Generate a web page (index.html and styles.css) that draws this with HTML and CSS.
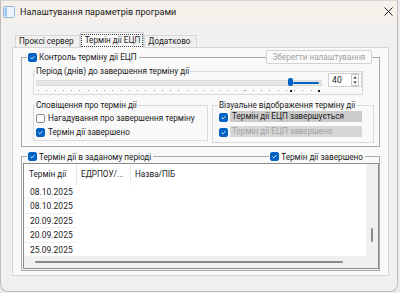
FILE: index.html
```html
<!DOCTYPE html>
<html lang="uk">
<head>
<meta charset="utf-8">
<title>Налаштування параметрів програми</title>
<link rel="stylesheet" href="styles.css">
</head>
<body>
<div class="window">
  <div class="titlebar">
    <svg class="app-icon" viewBox="0 0 12 12" width="12" height="12">
      <rect x="0.5" y="0.5" width="11" height="11" rx="1" fill="#eef5fc" stroke="#8fb8e0"/>
      <rect x="1.5" y="1.5" width="2.5" height="9" fill="#9cc3ea"/>
    </svg>
    <span class="title">Налаштування параметрів програми</span>
    <svg class="close" viewBox="0 0 9 9" width="9" height="9">
      <path d="M0.5 0.5 L8.5 8.5 M8.5 0.5 L0.5 8.5" stroke="#1f1f1f" stroke-width="1"/>
    </svg>
  </div>
  <div class="client">
    <div class="tabs">
      <div class="tab">Проксі сервер</div>
      <div class="tab active"><span class="focus">Термін дії ЕЦП</span></div>
      <div class="tab">Додатково</div>
    </div>
    <div class="page">
      <div class="group outer g-control">
        <div class="ghead">
          <span class="glabel"><span class="cb on"><svg viewBox="0 0 9 9"><path d="M2 4.6 L3.8 6.3 L7 2.8" fill="none" stroke="#fff" stroke-width="1.1"/></svg></span>Контроль терміну дії ЕЦП</span>
          <span class="fill"></span>
          <span class="btn">Зберегти налаштування</span>
        </div>
        <div class="group inner g-period">
          <div class="legend"><span class="ltext">Період (днів) до завершення терміну дії</span></div>
          <div class="period-body">
            <div class="trackbar">
              <div class="channel">
                <span class="sel"></span>
                <span class="thumb"></span>
              </div>
              <div class="ticks">
                <span class="tick-mark t-thumb"></span>
                <span class="tick-mark t-end"></span>
              </div>
            </div>
            <div class="spin">
              <span class="spin-val">40</span>
              <span class="spin-btns">
                <svg viewBox="0 0 8 12" width="8" height="12">
                  <rect x="0.5" y="0.5" width="7" height="11" fill="#fff" stroke="#c9c9c9"/>
                  <path d="M2 4.5 L4 2.5 L6 4.5 Z" fill="#333"/>
                  <path d="M2 7.5 L4 9.5 L6 7.5 Z" fill="#333"/>
                </svg>
              </span>
            </div>
          </div>
        </div>
        <div class="row2">
          <div class="group inner g-notify">
            <div class="legend"><span class="ltext">Сповіщення про термін дії</span></div>
            <div class="crow"><span class="cb"></span><span class="ctext">Нагадування про завершення терміну</span></div>
            <div class="crow"><span class="cb on"><svg viewBox="0 0 9 9"><path d="M2 4.6 L3.8 6.3 L7 2.8" fill="none" stroke="#fff" stroke-width="1.1"/></svg></span><span class="ctext">Термін дії завершено</span></div>
          </div>
          <div class="group inner g-visual">
            <div class="legend"><span class="ltext">Візуальне відображення терміну дії</span></div>
            <div class="vrow"><span class="cb on"><svg viewBox="0 0 9 9"><path d="M2 4.6 L3.8 6.3 L7 2.8" fill="none" stroke="#fff" stroke-width="1.1"/></svg></span><span class="vlabel soon">Термін дії ЕЦП завершується</span></div>
            <div class="vrow"><span class="cb on"><svg viewBox="0 0 9 9"><path d="M2 4.6 L3.8 6.3 L7 2.8" fill="none" stroke="#fff" stroke-width="1.1"/></svg></span><span class="vlabel done">Термін дії ЕЦП завершено</span></div>
          </div>
        </div>
      </div>

      <div class="group outer g-list">
        <div class="ghead">
          <span class="glabel"><span class="cb on"><svg viewBox="0 0 9 9"><path d="M2 4.6 L3.8 6.3 L7 2.8" fill="none" stroke="#fff" stroke-width="1.1"/></svg></span>Термін дії в заданому періоді</span>
          <span class="fill"></span>
          <span class="glabel right"><span class="cb on"><svg viewBox="0 0 9 9"><path d="M2 4.6 L3.8 6.3 L7 2.8" fill="none" stroke="#fff" stroke-width="1.1"/></svg></span>Термін дії завершено</span>
        </div>
        <div class="listview">
          <div class="lv-main">
            <div class="lv-head">
              <span class="hc c1">Термін дії</span>
              <span class="hc c2">ЕДРПОУ/...</span>
              <span class="hc c3">Назва/ПІБ</span>
            </div>
            <div class="lv-row"><span class="dc">08.10.2025</span></div>
            <div class="lv-row"><span class="dc">08.10.2025</span></div>
            <div class="lv-row"><span class="dc">20.09.2025</span></div>
            <div class="lv-row"><span class="dc">20.09.2025</span></div>
            <div class="lv-row"><span class="dc">25.09.2025</span></div>
          </div>
          <div class="vscroll"><span class="vthumb"></span></div>
          <div class="hscroll"><span class="hthumb"></span></div>
          <div class="corner"></div>
        </div>
      </div>
    </div>
  </div>
</div>
</body>
</html>
```

FILE: styles.css
```css
* { box-sizing: border-box; }
html, body { margin: 0; padding: 0; }
body {
  width: 400px;
  height: 293px;
  overflow: hidden;
  background: #ececec;
  font-family: Roboto, "Liberation Sans", sans-serif;
  font-size: 8.2px;
  color: #1b1b1b;
}
.window {
  width: 398px;
  height: 292px;
  border: 1px solid #bdbdbd;
  border-top-color: #d6d6d6;
  border-radius: 0 0 8px 8px;
  background: #f0f0f0;
  display: flex;
  flex-direction: column;
  overflow: hidden;
}
.titlebar {
  flex: none;
  height: 21px;
  background: #f5f0ea;
  display: flex;
  align-items: center;
  padding-left: 2px;
}
.app-icon { flex: none; margin-right: 5px; }
.title { flex: 1; font-size: 9px; color: #1a1a1a; }
.close { flex: none; margin-right: 4px; }

.client { flex: 1; padding: 10px 0 0 11px; }

.tabs {
  display: flex;
  align-items: flex-end;
  height: 16px;
  padding-left: 3px;
  margin-bottom: -1px;
  position: relative;
  z-index: 1;
}
.tab {
  height: 12px;
  margin-bottom: 1px;
  padding: 0 5px 0 3px;
  border: 1px solid #d6d6d6;
  border-bottom: none;
  background: #f0f0f0;
  line-height: 10px;
  white-space: nowrap;
}
.tab.active {
  height: 16px;
  margin-bottom: 0;
  padding: 2px 1px 0 1px;
  background: #f9f9f9;
  border-color: #cfcfcf;
}
.focus {
  display: block;
  outline: 1px dotted #444;
  outline-offset: 0;
  padding: 0 2px 0 3px;
  line-height: 11px;
}
.page {
  width: 377px;
  height: 229px;
  border: 1px solid #d6d6d6;
  background: #f9f9f9;
  padding: 9px 8px 0 8px;
}

.group { border: 1px solid #dadada; }
.group.outer { border-color: #a9a9a9; }

.ghead {
  display: flex;
  align-items: center;
  height: 14px;
  margin-top: -8px;
  padding-left: 5px;
}
.glabel {
  display: flex;
  align-items: center;
  background: #f9f9f9;
  padding: 0 2px 0 1px;
  white-space: nowrap;
  height: 11px;
}
.fill { flex: 1; }
.cb {
  flex: none;
  width: 9px;
  height: 9px;
  border: 1px solid #8a8a8a;
  border-radius: 2px;
  background: #fff;
  margin-right: 2px;
  display: flex;
}
.cb.on { background: #0063c4; border-color: #0063c4; }
.cb svg { width: 7px; height: 7px; }
.btn {
  width: 106px;
  height: 14px;
  margin-right: 7px;
  border: 1px solid #d2d2d2;
  border-radius: 2px;
  background: #fbfbfb;
  color: #a2a2a2;
  text-align: center;
  line-height: 12px;
}

.g-control { height: 90px; }

.legend { height: 11px; margin-top: -6px; display: flex; padding-left: 1px; }
.ltext { background: #f9f9f9; padding: 0 1px; line-height: 11px; white-space: nowrap; }

.g-period { width: 330px; height: 24px; margin: 7px 0 0 11px; }
.period-body { display: flex; height: 17px; }
.trackbar { width: 287px; margin-left: 2px; }
.channel {
  position: relative;
  height: 6px;
  margin-top: 3px;
  background: #e6e6e6;
  border: 1px solid #dcdcdc;
}
.sel {
  position: absolute;
  left: 256px;
  top: 1px;
  width: 26px;
  height: 2px;
  border-radius: 1px;
  background: #0063c4;
}
.thumb {
  position: absolute;
  left: 251px;
  top: -3px;
  width: 5px;
  height: 8px;
  border-radius: 2px;
  background: #0063c4;
}
.ticks {
  position: relative;
  height: 1px;
  margin: 4px 3px 0 2px;
  background: repeating-linear-gradient(90deg, #9a9a9a 0 1px, transparent 1px 8.26px);
}
.tick-mark {
  position: absolute;
  top: 0;
  width: 2px;
  height: 2px;
  background: #1a1a1a;
}
.t-thumb { left: 252px; }
.t-end { right: -1px; }

.spin {
  width: 34px;
  height: 14px;
  margin: -4px 0 0 6px;
  background: #fff;
  border: 1px solid #d0d0d0;
  display: flex;
  align-items: center;
  justify-content: space-between;
  padding: 0 2px 0 3px;
  font-size: 8.6px;
}
.spin-val { line-height: 12px; }
.spin-btns { display: flex; }

.row2 { display: flex; margin: 10px 0 0 11px; }
.g-notify { width: 175px; height: 36px; }
.crow {
  display: flex;
  align-items: center;
  height: 14px;
  padding-left: 2px;
}
.crow .cb { margin-right: 3px; }
.ctext { white-space: nowrap; }

.g-visual { width: 162px; height: 38px; margin-left: 4px; }
.g-visual .legend { padding-left: 5px; }
.vrow {
  display: flex;
  align-items: flex-start;
  height: 15px;
  padding-left: 6px;
}
.vrow .cb { margin-top: 2px; margin-right: 2px; }
.vlabel {
  width: 132px;
  height: 11px;
  line-height: 11px;
  padding-left: 2px;
  white-space: nowrap;
}
.vlabel.soon { background: #cbcbcb; color: #1b1b1b; }
.vlabel.done { background: #d6d6d6; color: #a3a3a3; }

.g-list { height: 115px; margin-top: 9px; }
.g-list .ghead { height: 13px; margin-top: -7px; }
.glabel.right { margin-right: 14px; }

.listview {
  width: 356px;
  height: 106px;
  margin-left: 1px;
  border: 1px solid #8c8c8c;
  background: #fff;
  display: grid;
  grid-template-columns: 1fr 12px;
  grid-template-rows: 1fr 12px;
}
.lv-main { overflow: hidden; }
.lv-head { display: flex; height: 21px; }
.hc {
  height: 21px;
  line-height: 21px;
  border-right: 1px solid #e8e8e8;
  white-space: nowrap;
}
.c1 { width: 53px; padding-left: 5px; }
.c2 { width: 54px; padding-left: 4px; }
.c3 { flex: 1; padding-left: 4px; border-right: none; }
.lv-row { height: 14.4px; }
.dc {
  display: block;
  width: 53px;
  height: 14.4px;
  line-height: 14px;
  padding-left: 6px;
  border-bottom: 1px solid #f0f0f0;
  font-size: 8.5px;
}
.vscroll { background: #f0f0f0; padding: 64px 0 0 5px; }
.vthumb { display: block; width: 2px; height: 14px; border-radius: 1px; background: #8a8a8a; }
.hscroll { background: #f0f0f0; padding: 5px 0 0 11px; }
.hthumb { display: block; width: 308px; height: 2px; border-radius: 1px; background: #8a8a8a; }
.corner { background: #f0f0f0; }
```
